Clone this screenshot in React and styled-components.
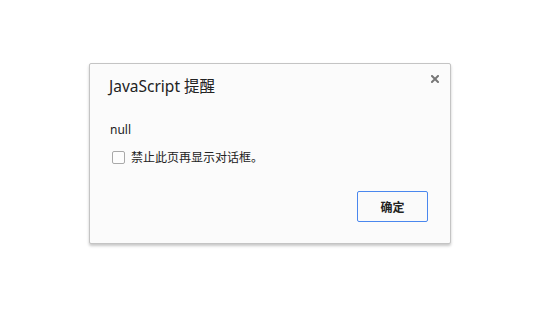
import React from "react";
import styled, { createGlobalStyle } from "styled-components";

const Global = createGlobalStyle`
  html, body { margin: 0; padding: 0; background: #ffffff; }
  body { font-family: "Noto Sans", "Noto Sans CJK SC", sans-serif; }
  #root { width: 535px; height: 310px; }
`;

const Page = styled.div`
  width: 535px;
  height: 310px;
  box-sizing: border-box;
  padding: 63px 0 0 89px;
`;

const Dialog = styled.div`
  position: relative;
  box-sizing: border-box;
  width: 362px;
  height: 181px;
  background: #fbfbfb;
  border: 1px solid #c4c4c4;
  border-radius: 2px;
  box-shadow: 0 2px 3px rgba(0, 0, 0, 0.22);
  padding: 12px 22px 21px 19px;
  display: flex;
  flex-direction: column;
`;

const Close = styled.button`
  position: absolute;
  top: 10px;
  right: 10px;
  width: 10px;
  height: 10px;
  padding: 0;
  border: 0;
  background: transparent;
  display: flex;
  align-items: center;
  justify-content: center;
`;

const Title = styled.div`
  font-family: "Noto Sans", "Noto Sans CJK SC", sans-serif;
  font-size: 15.5px;
  line-height: 20px;
  color: #222;
`;

const Message = styled.div`
  margin-top: 26px;
  font-size: 12px;
  line-height: 16px;
  color: #222;
  padding-left: 1px;
`;

const CheckRow = styled.label`
  margin-top: 11px;
  display: flex;
  align-items: center;
  gap: 6px;
  padding-left: 3px;
  font-family: "Noto Sans CJK SC", sans-serif;
  font-size: 12px;
  line-height: 16px;
  color: #222;
`;

const Box = styled.span`
  box-sizing: border-box;
  width: 13px;
  height: 13px;
  border: 1px solid #a9a9a9;
  border-radius: 2px;
  background: #fdfdfd;
`;

const Footer = styled.div`
  margin-top: auto;
  display: flex;
  justify-content: flex-end;
`;

const Button = styled.button`
  appearance: none;
  box-sizing: border-box;
  width: 71px;
  height: 31px;
  border: 1px solid #4a87ee;
  border-radius: 2px;
  background-color: #fafafa;
  font-family: "Noto Sans CJK SC", sans-serif;
  font-weight: bold;
  font-size: 12px;
  color: #222;
  padding: 0;
`;

export default function App() {
  return (
    <>
      <Global />
      <Page>
        <Dialog>
          <Close aria-label="close">
            <svg width="8" height="8" viewBox="0 0 8 8">
              <path d="M1 1L7 7M7 1L1 7" stroke="#777" strokeWidth="2" strokeLinecap="square" />
            </svg>
          </Close>
          <Title>JavaScript 提醒</Title>
          <Message>null</Message>
          <CheckRow>
            <Box />
            禁止此页再显示对话框。
          </CheckRow>
          <Footer>
            <Button type="button">确定</Button>
          </Footer>
        </Dialog>
      </Page>
    </>
  );
}
